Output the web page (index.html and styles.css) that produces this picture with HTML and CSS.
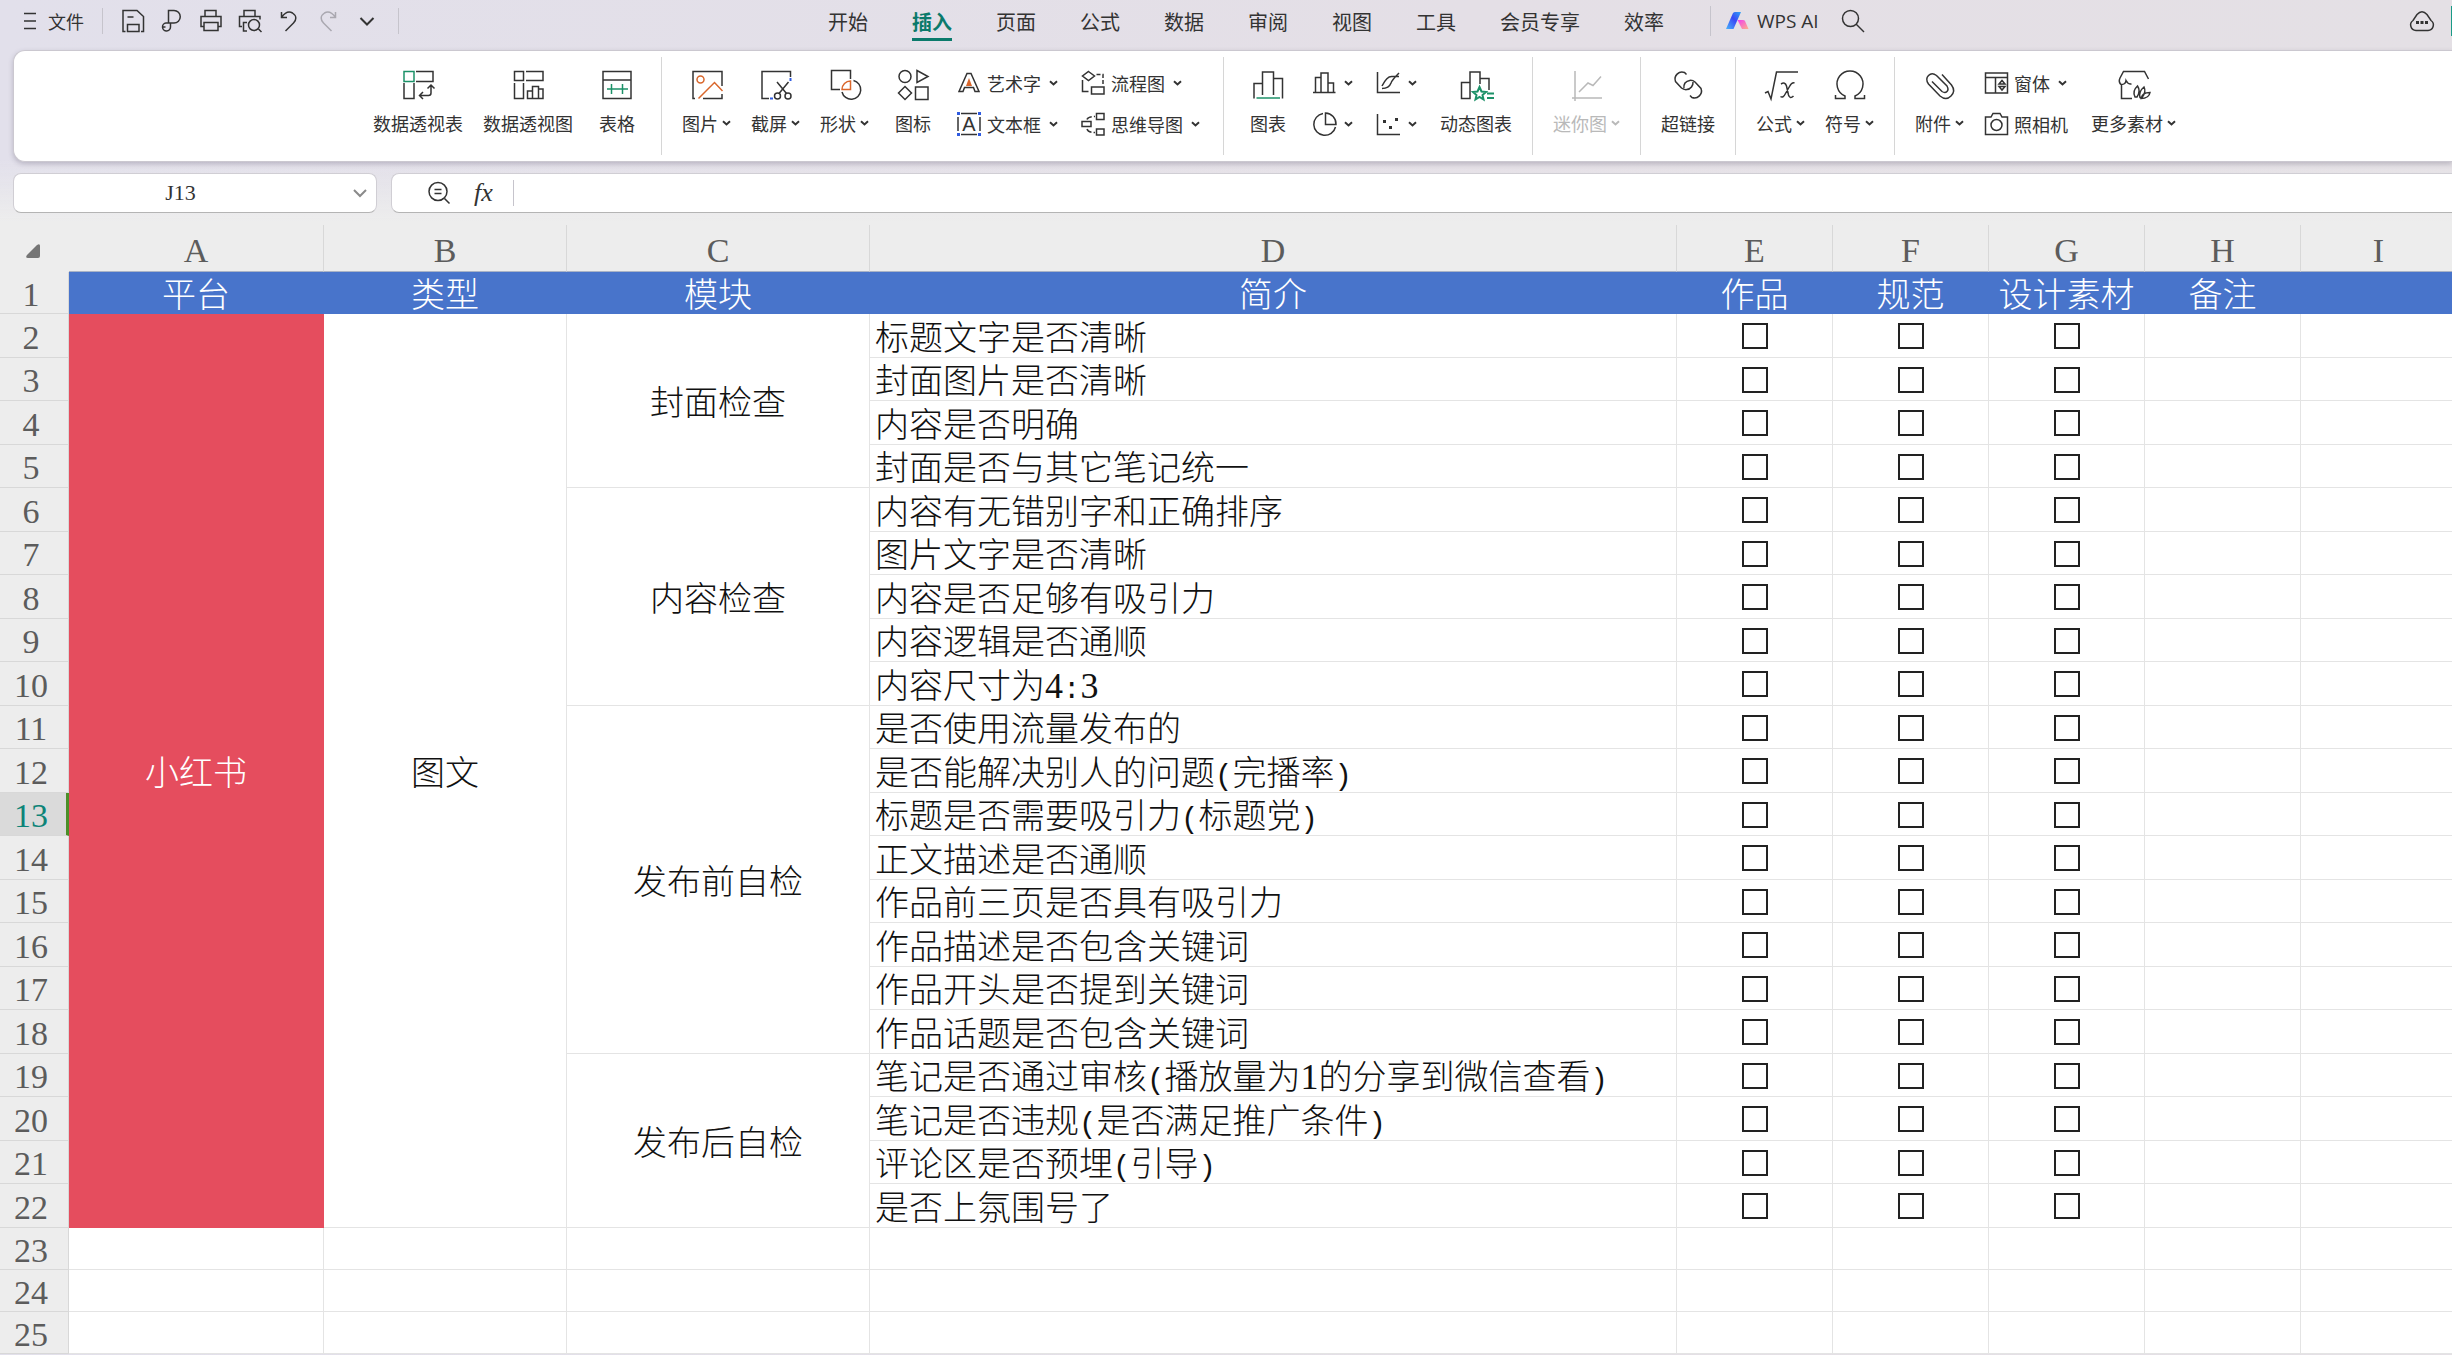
FILE: index.html
```html
<!DOCTYPE html>
<html lang="zh-CN">
<head>
<meta charset="utf-8">
<title>WPS 表格</title>
<link rel="stylesheet" href="styles.css">
</head>
<body>
<svg class="defs" aria-hidden="true">
  <symbol id="chev" viewBox="0 0 9 6"><path d="M1 1.2l3.5 3.2L8 1.2" fill="none" stroke="currentColor" stroke-width="2"/></symbol>
</svg>

<header class="topbar">
  <div class="quick">
    <button class="file"><svg width="12" height="18" viewBox="0 0 12 18"><path d="M0 1.5h12M0 9h12M0 16.5h12"/></svg>文件</button>
    <span class="rule"></span>
    <div class="quick-buttons">
      <button aria-label="保存"><svg width="24" height="24" viewBox="0 0 24 24"><path d="M4.500 22.500H2V1.500h14l6.500 6V22.500h-2.500M6.500 22.500v-7H18v7zM6.500 8h6"/></svg></button>
      <button aria-label="输出"><svg width="24" height="24" viewBox="0 0 24 24"><path d="M8.500 14V1.500H14a6 6 0 0 1 0 12.500H6a4 4 0 1 0 4.500 4V14M2.500 18h3"/></svg></button>
      <button aria-label="打印"><svg width="24" height="24" viewBox="0 0 24 24"><path d="M6 7V1.500h11V7M5 17.500H2V7.500h20v10h-3M5 13.500h14v8H5z"/></svg></button>
      <button aria-label="打印预览"><svg width="24" height="24" viewBox="0 0 24 24"><path d="M6 7V1.500h11V7M4 17.500H1.500V7.500H22v3M9 22H5.500v-8.500H9M20.500 20l3 3"/><circle cx="16" cy="16" r="5.500"/></svg></button>
      <button aria-label="撤销"><svg width="24" height="24" viewBox="0 0 24 24"><path d="M4.500 3v5.500H10M4.500 8.500C8 3.500 12 2 15.500 4c4.500 3 4 7 1 10L8.500 22"/></svg></button>
      <button aria-label="恢复" class="dim"><svg width="24" height="24" viewBox="0 0 24 24"><path d="M19.500 3v5.500H14M19.500 8.500C16 3.500 12 2 8.500 4c-4.500 3-4 7-1 10l8 8"/></svg></button>
      <button aria-label="更多"><svg width="24" height="24" viewBox="0 0 24 24"><path d="M5.500 9l6.500 6.500L18.500 9" stroke-width="2"/></svg></button>
    </div>
    <span class="rule"></span>
  </div>
  <nav class="tabs">
    <a href="#">开始</a><a href="#" class="active" aria-current="page">插入</a><a href="#">页面</a><a href="#">公式</a><a href="#">数据</a><a href="#">审阅</a><a href="#">视图</a><a href="#">工具</a><a href="#">会员专享</a><a href="#">效率</a>
  </nav>
  <div class="ai">
    <span class="rule tall"></span>
    <button class="ai-button"><svg width="24" height="18" viewBox="0 0 24 18"><defs><linearGradient id="g1" x1="1" y1="0" x2="0" y2="1"><stop offset="0" stop-color="#2fa4f5"/><stop offset=".45" stop-color="#3a48f5"/><stop offset="1" stop-color="#48b4fa"/></linearGradient><linearGradient id="g2" x1="0" y1="0" x2="1" y2="1"><stop offset="0" stop-color="#f03df0"/><stop offset="1" stop-color="#ffb08a"/></linearGradient></defs><path d="M8 1q1-1 2-1h6L8.500 17H1z" fill="url(#g1)" stroke="none"/><path d="M12.500 8H18q1.500 0 2 1l3.500 8h-6.500z" fill="url(#g2)" stroke="none"/></svg>WPS AI</button>
    <button class="search" aria-label="搜索"><svg width="24" height="24" viewBox="0 0 24 24"><circle cx="9.500" cy="9.500" r="8"/><path d="M15 15l8 8"/></svg></button>
  </div>
  <div class="account">
    <button aria-label="云服务"><svg width="26" height="22" viewBox="0 0 26 22"><path d="M7 20.500a5.500 5.500 0 0 1-3-10L8 4.500Q13-1 18 4.500l4 6a5.500 5.500 0 0 1-3 10z"/><path d="M7 12.500h3M11.500 12.500h3M16 12.500h3" stroke-width="3"/></svg></button>
    <button class="share" aria-label="分享"></button>
  </div>
</header>

<section class="ribbon" aria-label="插入">
  <button class="big"><svg width="32" height="32" viewBox="0 0 32 32"><path class="g" d="M2 2.500h10v10H2z"/><path d="M14 2.500h17v10H14M2 14v15.500h10V14M29 16v8q0 2.500-2.500 2.500H17.500M25.500 19.500l3.500-3.500 3.500 3.500M21 23l-3.500 3.500L21 30"/></svg><span>数据透视表</span></button>
  <button class="big"><svg width="32" height="32" viewBox="0 0 32 32"><path d="M2.500 2.500h9v9h-9zM14 2.500h17v9H14M2.500 14v15.500h9V14M20.500 29.500h-5V22h5M20.500 29.500V17.500h6v12zM26.500 20H31v9.500h-4.500"/></svg><span>数据透视图</span></button>
  <button class="big"><svg width="32" height="32" viewBox="0 0 32 32"><path d="M2 2.500h28v27H2zM2 11h28"/><path class="g" d="M6 20h21M10.500 15v10M21.500 15v10"/></svg><span>表格</span></button>
  <span class="sep"></span>
  <button class="big"><svg width="32" height="32" viewBox="0 0 32 32"><path d="M4 29.500H2v-27h29V17M12 29.500h19V25"/><g class="o"><circle cx="9.500" cy="10.500" r="3.500"/><path d="M7.500 29.500l16-16 8 8.500"/></g></svg><span>图片<svg class="chev"><use href="#chev"/></svg></span></button>
  <button class="big"><svg width="32" height="32" viewBox="0 0 32 32"><path d="M9 29.500H2v-27h28.500V8M17 13l9.500 11.500M28.500 13L19 24.500"/><circle cx="17.500" cy="27" r="3"/><circle cx="28" cy="27" r="3"/><path class="b" d="M10 29.500h3M30.500 9v3"/></svg><span>截屏<svg class="chev"><use href="#chev"/></svg></span></button>
  <button class="big"><svg width="32" height="32" viewBox="0 0 32 32"><path d="M11 20.500H2.500V1.500h19V10M24.500 11.500a9.500 9.500 0 1 1-11.500 11.500"/><path class="o" d="M21.500 12v8.500H13a8.500 8.500 0 0 1 8.500-8.500z"/></svg><span>形状<svg class="chev"><use href="#chev"/></svg></span></button>
  <button class="big"><svg width="32" height="32" viewBox="0 0 32 32"><circle cx="8" cy="7.500" r="6"/><path d="M20 1.500l11 6-11 6zM8 17.500l6.500 6.500L8 30.500 1.500 24zM18.500 18H31v12.500H18.500z"/></svg><span>图标</span></button>
  <div class="pair">
    <button class="small"><svg width="24" height="24" viewBox="0 0 24 24"><path d="M10 2.500h4l8 18h-4l-1.500-4h-9L6 20.500H2z"/><path d="M12 7l3 8H9z" fill="#d9662b" stroke="none"/></svg>艺术字<svg class="chev"><use href="#chev"/></svg></button>
    <button class="small"><svg width="24" height="24" viewBox="0 0 24 24"><path d="M4 1.500h16M4 22.500h16M1 5v14M23 5v14"/><path d="M0 0h3v3H0zM21 0h3v3h-3zM0 21h3v3H0zM21 21h3v3h-3z" fill="#2f5be0" stroke="none"/><text x="12" y="19" font-size="20" text-anchor="middle">A</text></svg>文本框<svg class="chev"><use href="#chev"/></svg></button>
  </div>
  <div class="pair">
    <button class="small"><svg width="24" height="24" viewBox="0 0 24 24"><path d="M7.500 0.500l6 4.500-6 4.500-6-4.500zM10.500 16H23v7H10.500zM1.500 9v11.500h6"/><path d="M15.500 3.500H22V15" stroke-dasharray="4 2"/></svg>流程图<svg class="chev"><use href="#chev"/></svg></button>
    <button class="small"><svg width="24" height="24" viewBox="0 0 24 24"><path d="M1 9.500h9v5H1zM15.500 1.500H23v6h-7.500zM15.500 17H23v6h-7.500z"/><path d="M6 7.500q1-3 8-3M6 17q1 3.500 8 3.500" stroke-dasharray="6 2"/></svg>思维导图<svg class="chev"><use href="#chev"/></svg></button>
  </div>
  <span class="sep"></span>
  <button class="big"><svg width="32" height="32" viewBox="0 0 32 32"><path d="M2 29.500v-15h8.500M10.500 26V3h11v23M21.500 9.500h9v20"/><path class="g" d="M4.500 29h23.500"/></svg><span>图表</span></button>
  <div class="pair">
    <button class="small" aria-label="柱形图"><svg width="24" height="24" viewBox="0 0 24 24"><path d="M1 21.500h22.500M3.500 21.500v-15H9v15V2h7v19.500M16 12h5.500v9.500"/></svg><svg class="chev"><use href="#chev"/></svg></button>
    <button class="small" aria-label="饼图"><svg width="24" height="24" viewBox="0 0 24 24"><path d="M11 1.500A11 11 0 1 0 23.500 15M13.500 1v11.500h10.500A11 11 0 0 0 13.500 1z"/></svg><svg class="chev"><use href="#chev"/></svg></button>
  </div>
  <div class="pair">
    <button class="small" aria-label="折线图"><svg width="24" height="24" viewBox="0 0 24 24"><path d="M1.500 1v20.500H24M6 15q5-10 10-9.500h7M6 17.500q7 0 9-5.500 1-3 8-10"/></svg><svg class="chev"><use href="#chev"/></svg></button>
    <button class="small" aria-label="散点图"><svg width="24" height="24" viewBox="0 0 24 24"><path d="M1.500 2v20.500H24"/><path d="M7 9.500h3M13 15.500h3M19 7.500h3" stroke-width="3"/></svg><svg class="chev"><use href="#chev"/></svg></button>
  </div>
  <button class="big"><svg width="32" height="32" viewBox="0 0 32 32"><path d="M10 29.500H1.500v-16H10zM10 13.500V3h10v12M20 9.500h9V21"/><path class="g" stroke-width="2" d="M19.500 18l2 4.500 4.500.5-3.500 3 1 4.500-4-2.500-4 2.500 1-4.500-3.500-3 4.500-.5zM27 24.500h7M27 29h7"/></svg><span>动态图表</span></button>
  <span class="sep"></span>
  <button class="big dim" disabled><svg width="32" height="32" viewBox="0 0 32 32"><path d="M4 2v30M1 29h30M8 23l9-9 5 2.500 8-9"/></svg><span>迷你图<svg class="chev"><use href="#chev"/></svg></span></button>
  <span class="sep"></span>
  <button class="big"><svg width="32" height="32" viewBox="0 0 32 32"><path d="M14.500 5.500l-2-2a7 7 0 0 0-9 9l6 6.500a7 7 0 0 0 10-1 7 7 0 0 0 1.500-5M18 26.500l2 2a7 7 0 0 0 9-9L23 13a7 7 0 0 0-10 1 7 7 0 0 0-1 5"/></svg><span>超链接</span></button>
  <span class="sep"></span>
  <button class="big"><svg width="32" height="32" viewBox="0 0 32 32"><path d="M0 24l3-1.500L6 30 11.500 3H33"/><path d="M16 15q4-2.500 5.500 2l2 9q1.500 4.500 5 1M29.500 14q-2.500-1-5 3.500l-4 7q-2.500 5-5 3"/></svg><span>公式<svg class="chev"><use href="#chev"/></svg></span></button>
  <button class="big"><svg width="32" height="32" viewBox="0 0 32 32"><path d="M1.500 26v3.500H11v-2.500A13 13 0 1 1 21 27v2.500h9.500V26"/></svg><span>符号<svg class="chev"><use href="#chev"/></svg></span></button>
  <span class="sep"></span>
  <button class="big"><svg width="32" height="32" viewBox="0 0 32 32"><path d="M8 12.500l10 10q3 2 5 0t0-5.500L12.500 6.500q-4.500-3.500-8 0t0 8.500l11.500 12q6 5 11 0t.5-11L18 5.500"/></svg><span>附件<svg class="chev"><use href="#chev"/></svg></span></button>
  <div class="pair">
    <button class="small"><svg width="24" height="24" viewBox="0 0 24 24"><path d="M1.500 2h22v20h-22zM1.500 6.500h22M11.500 6.500V22M15 13l3-3.500 3 3.500zM15 15.500l3 3.500 3-3.500z"/></svg>窗体<svg class="chev"><use href="#chev"/></svg></button>
    <button class="small"><svg width="24" height="24" viewBox="0 0 24 24"><path d="M1.500 5H7l2-3.500h7L18 5h5.500v17.500h-22z"/><circle cx="12.500" cy="13" r="5.500"/></svg>照相机</button>
  </div>
  <button class="big"><svg width="32" height="32" viewBox="0 0 32 32"><path d="M14 29.500H3.500V16Q0 13 2 9l3.500-6.500h21l4 7.500M3.500 15.500q4 0 4.500-4 2 4 5.500 3.500M17 28q-3-6 2.500-11 3.500 5-.5 11zM22 28.500q-1.500-6 4-10.500 2.500 5-2 10.500zM23 29.500q1-6 9-6-1 6-9 6z"/></svg><span>更多素材<svg class="chev"><use href="#chev"/></svg></span></button>
</section>

<div class="formula-row">
  <div class="name-box">
    <input type="text" value="J13" aria-label="名称框">
    <button aria-label="展开名称框"><svg width="14" height="8" viewBox="0 0 14 8"><path d="M1 1l6 6 6-6" stroke="#8a8a8a" stroke-width="2"/></svg></button>
  </div>
  <div class="formula-box">
    <button aria-label="缩放"><svg width="22" height="24" viewBox="0 0 22 24"><circle cx="10" cy="10.500" r="9"/><path d="M6.500 8.500h7M6.500 12.500h7M16.500 17.500l5 5"/></svg></button>
    <button class="fx" aria-label="插入函数">fx</button>
    <span class="rule"></span>
    <input type="text" aria-label="编辑栏">
  </div>
</div>

<main class="sheet">
<table>
  <colgroup><col class="w-num"><col class="w-a"><col class="w-b"><col class="w-c"><col class="w-d"><col class="w-e"><col class="w-e"><col class="w-e"><col class="w-e"><col></colgroup>
  <thead>
    <tr><th class="corner"><svg width="14" height="14" viewBox="0 0 14 14"><path d="M14 2v10q0 2-2 2H2q-3 0-1-3L11 1q3-2 3 1z" fill="#757575" stroke="none"/></svg></th><th>A</th><th>B</th><th>C</th><th>D</th><th>E</th><th>F</th><th>G</th><th>H</th><th>I</th></tr>
  </thead>
  <tbody>
    <tr class="titles"><th>1</th><td>平台</td><td>类型</td><td>模块</td><td>简介</td><td>作品</td><td>规范</td><td>设计素材</td><td>备注</td><td></td></tr>
    <tr><th>2</th><td class="brand" rowspan="21">小红书</td><td class="mid" rowspan="21">图文</td><td class="mid" rowspan="4">封面检查</td><td>标题文字是否清晰</td><td class="tick"><input type="checkbox" aria-label="作品 2"></td><td class="tick"><input type="checkbox" aria-label="规范 2"></td><td class="tick"><input type="checkbox" aria-label="设计素材 2"></td><td></td><td></td></tr>
    <tr><th>3</th><td>封面图片是否清晰</td><td class="tick"><input type="checkbox" aria-label="作品 3"></td><td class="tick"><input type="checkbox" aria-label="规范 3"></td><td class="tick"><input type="checkbox" aria-label="设计素材 3"></td><td></td><td></td></tr>
    <tr><th>4</th><td>内容是否明确</td><td class="tick"><input type="checkbox" aria-label="作品 4"></td><td class="tick"><input type="checkbox" aria-label="规范 4"></td><td class="tick"><input type="checkbox" aria-label="设计素材 4"></td><td></td><td></td></tr>
    <tr><th>5</th><td>封面是否与其它笔记统一</td><td class="tick"><input type="checkbox" aria-label="作品 5"></td><td class="tick"><input type="checkbox" aria-label="规范 5"></td><td class="tick"><input type="checkbox" aria-label="设计素材 5"></td><td></td><td></td></tr>
    <tr><th>6</th><td class="mid" rowspan="5">内容检查</td><td>内容有无错别字和正确排序</td><td class="tick"><input type="checkbox" aria-label="作品 6"></td><td class="tick"><input type="checkbox" aria-label="规范 6"></td><td class="tick"><input type="checkbox" aria-label="设计素材 6"></td><td></td><td></td></tr>
    <tr><th>7</th><td>图片文字是否清晰</td><td class="tick"><input type="checkbox" aria-label="作品 7"></td><td class="tick"><input type="checkbox" aria-label="规范 7"></td><td class="tick"><input type="checkbox" aria-label="设计素材 7"></td><td></td><td></td></tr>
    <tr><th>8</th><td>内容是否足够有吸引力</td><td class="tick"><input type="checkbox" aria-label="作品 8"></td><td class="tick"><input type="checkbox" aria-label="规范 8"></td><td class="tick"><input type="checkbox" aria-label="设计素材 8"></td><td></td><td></td></tr>
    <tr><th>9</th><td>内容逻辑是否通顺</td><td class="tick"><input type="checkbox" aria-label="作品 9"></td><td class="tick"><input type="checkbox" aria-label="规范 9"></td><td class="tick"><input type="checkbox" aria-label="设计素材 9"></td><td></td><td></td></tr>
    <tr><th>10</th><td>内容尺寸为<span class="digit">4</span><span class="half">:</span><span class="digit">3</span></td><td class="tick"><input type="checkbox" aria-label="作品 10"></td><td class="tick"><input type="checkbox" aria-label="规范 10"></td><td class="tick"><input type="checkbox" aria-label="设计素材 10"></td><td></td><td></td></tr>
    <tr><th>11</th><td class="mid" rowspan="8">发布前自检</td><td>是否使用流量发布的</td><td class="tick"><input type="checkbox" aria-label="作品 11"></td><td class="tick"><input type="checkbox" aria-label="规范 11"></td><td class="tick"><input type="checkbox" aria-label="设计素材 11"></td><td></td><td></td></tr>
    <tr><th>12</th><td>是否能解决别人的问题<span class="half">(</span>完播率<span class="half">)</span></td><td class="tick"><input type="checkbox" aria-label="作品 12"></td><td class="tick"><input type="checkbox" aria-label="规范 12"></td><td class="tick"><input type="checkbox" aria-label="设计素材 12"></td><td></td><td></td></tr>
    <tr><th class="current">13</th><td>标题是否需要吸引力<span class="half">(</span>标题党<span class="half">)</span></td><td class="tick"><input type="checkbox" aria-label="作品 13"></td><td class="tick"><input type="checkbox" aria-label="规范 13"></td><td class="tick"><input type="checkbox" aria-label="设计素材 13"></td><td></td><td></td></tr>
    <tr><th>14</th><td>正文描述是否通顺</td><td class="tick"><input type="checkbox" aria-label="作品 14"></td><td class="tick"><input type="checkbox" aria-label="规范 14"></td><td class="tick"><input type="checkbox" aria-label="设计素材 14"></td><td></td><td></td></tr>
    <tr><th>15</th><td>作品前三页是否具有吸引力</td><td class="tick"><input type="checkbox" aria-label="作品 15"></td><td class="tick"><input type="checkbox" aria-label="规范 15"></td><td class="tick"><input type="checkbox" aria-label="设计素材 15"></td><td></td><td></td></tr>
    <tr><th>16</th><td>作品描述是否包含关键词</td><td class="tick"><input type="checkbox" aria-label="作品 16"></td><td class="tick"><input type="checkbox" aria-label="规范 16"></td><td class="tick"><input type="checkbox" aria-label="设计素材 16"></td><td></td><td></td></tr>
    <tr><th>17</th><td>作品开头是否提到关键词</td><td class="tick"><input type="checkbox" aria-label="作品 17"></td><td class="tick"><input type="checkbox" aria-label="规范 17"></td><td class="tick"><input type="checkbox" aria-label="设计素材 17"></td><td></td><td></td></tr>
    <tr><th>18</th><td>作品话题是否包含关键词</td><td class="tick"><input type="checkbox" aria-label="作品 18"></td><td class="tick"><input type="checkbox" aria-label="规范 18"></td><td class="tick"><input type="checkbox" aria-label="设计素材 18"></td><td></td><td></td></tr>
    <tr><th>19</th><td class="mid" rowspan="4">发布后自检</td><td>笔记是否通过审核<span class="half">(</span>播放量为<span class="digit">1</span>的分享到微信查看<span class="half">)</span></td><td class="tick"><input type="checkbox" aria-label="作品 19"></td><td class="tick"><input type="checkbox" aria-label="规范 19"></td><td class="tick"><input type="checkbox" aria-label="设计素材 19"></td><td></td><td></td></tr>
    <tr><th>20</th><td>笔记是否违规<span class="half">(</span>是否满足推广条件<span class="half">)</span></td><td class="tick"><input type="checkbox" aria-label="作品 20"></td><td class="tick"><input type="checkbox" aria-label="规范 20"></td><td class="tick"><input type="checkbox" aria-label="设计素材 20"></td><td></td><td></td></tr>
    <tr><th>21</th><td>评论区是否预埋<span class="half">(</span>引导<span class="half">)</span></td><td class="tick"><input type="checkbox" aria-label="作品 21"></td><td class="tick"><input type="checkbox" aria-label="规范 21"></td><td class="tick"><input type="checkbox" aria-label="设计素材 21"></td><td></td><td></td></tr>
    <tr><th>22</th><td>是否上氛围号了</td><td class="tick"><input type="checkbox" aria-label="作品 22"></td><td class="tick"><input type="checkbox" aria-label="规范 22"></td><td class="tick"><input type="checkbox" aria-label="设计素材 22"></td><td></td><td></td></tr>
    <tr class="blank"><th>23</th><td></td><td></td><td></td><td></td><td></td><td></td><td></td><td></td><td></td></tr>
    <tr class="blank"><th>24</th><td></td><td></td><td></td><td></td><td></td><td></td><td></td><td></td><td></td></tr>
    <tr class="blank"><th>25</th><td></td><td></td><td></td><td></td><td></td><td></td><td></td><td></td><td></td></tr>
  </tbody>
</table>
</main>
</body>
</html>
```
FILE: styles.css
```css
* { box-sizing: border-box; }

body {
  margin: 0;
  overflow-x: hidden;
  background:
    linear-gradient(to bottom, rgba(237, 237, 237, 0) 160px, #ededed 222px),
    linear-gradient(to right, #e2e0eb, #e4dfe6 60%, #e4e0e5);
  color: #333;
  font-family: "Noto Sans CJK SC", sans-serif;
  font-size: 18px;
  line-height: 24px;
}

button, input { font: inherit; color: inherit; margin: 0; }
button { padding: 0; border: 0; background: none; flex: none; }

svg { fill: none; stroke: currentColor; stroke-width: 1.5; overflow: visible; flex: none; }
svg text { fill: currentColor; stroke: none; font-family: "Liberation Sans", sans-serif; }
.defs { display: none; }
.chev { width: 9px; height: 6px; }
.g { stroke: #1c9168; }
.o { stroke: #d9662b; }
.b { stroke: #2f5be0; stroke-width: 2; }
.rule { flex: none; width: 1px; height: 26px; background: #c6c4cc; }
.rule.tall { height: 30px; }

/* Top bar */
.topbar { display: flex; align-items: center; height: 50px; padding-bottom: 9px; overflow: hidden; }
.quick { display: flex; align-items: center; width: 828px; padding-left: 24px; gap: 12px; flex: none; }
.file { display: flex; align-items: center; gap: 12px; margin-right: 6px; }
.quick-buttons { display: flex; margin-left: -2px; }
.quick-buttons button { display: flex; justify-content: center; width: 39px; }
.topbar .dim { color: #aaa8b0; }

.tabs { display: flex; gap: 44px; flex: none; font-size: 20px; }
.tabs a { color: #333; text-decoration: none; line-height: 30px; height: 34px; margin-top: 6px; }
.tabs .active { color: #0b7a6b; font-weight: 700; border-bottom: 3px solid #0b7a6b; }

.ai { display: flex; align-items: center; margin-left: 46px; flex: none; }
.ai-button { display: flex; align-items: center; gap: 8px; margin-left: 14px; font-family: "Open Sans", "Noto Sans CJK SC", sans-serif; font-size: 19px; }
.search { display: flex; margin-left: 22px; }
.account { display: flex; align-items: center; gap: 16px; margin-left: auto; margin-right: -79px; }
.account button { display: flex; }
.share { width: 80px; height: 30px; background: #1a9a86; }

/* Ribbon */
.ribbon {
  display: flex;
  gap: 20px;
  height: 112px;
  margin-left: 13px;
  padding-left: 359px;
  background: #fff;
  border: 1px solid #cbc8d0;
  border-right: 0;
  border-radius: 12px 0 0 12px;
  box-shadow: 0 2px 5px rgba(60, 50, 80, .25);
  overflow: hidden;
}
.sep { flex: none; width: 1px; margin: 6px 0; background: #d6d6d6; }
.big { display: flex; flex-direction: column; align-items: center; gap: 10px; min-width: 48px; padding-top: 18px; }
.big span { display: flex; align-items: center; gap: 4px; white-space: nowrap; }
.big.dim { color: #b9b9b9; }
.pair { display: flex; flex-direction: column; gap: 17px; padding: 20px 3px 0 0; flex: none; }
.small { display: flex; align-items: center; height: 24px; gap: 6px; white-space: nowrap; }
.small .chev { margin-left: 2px; }

/* Formula bar */
.formula-row { display: flex; gap: 14px; padding: 11px 0 12px 13px; }
.name-box, .formula-box {
  display: flex;
  align-items: center;
  height: 40px;
  background: #fff;
  border: 1px solid #d0ced4;
  border-bottom-color: #b4b4b4;
  border-radius: 8px;
}
.name-box { width: 364px; }
.name-box input {
  flex: 1;
  min-width: 0;
  border: 0;
  background: none;
  text-align: center;
  font-family: "Liberation Serif", serif;
  font-size: 22px;
}
.name-box button { display: flex; margin: 0 9px 0 6px; }
.formula-box { flex: 1; border-right: 0; border-radius: 8px 0 0 8px; padding-left: 36px; }
.formula-box button { display: flex; }
.formula-box .fx { margin: 0 20px 0 24px; font-family: "Liberation Serif", serif; font-style: italic; font-size: 26px; }
.formula-box input { flex: 1; border: 0; background: none; }

/* Sheet */
.sheet { overflow: hidden; }
table {
  width: 100%;
  min-width: 2457px;
  table-layout: fixed;
  border-spacing: 0;
  font-size: 34px;
  font-weight: 300;
  line-height: 36px;
}
.w-num { width: 69px; }
.w-a { width: 255px; }
.w-b { width: 243px; }
.w-c { width: 303px; }
.w-d { width: 807px; }
.w-e { width: 156px; }

th, td { height: 43px; padding: 4px 0 0; border: 0 solid #e4e4e4; border-width: 0 1px 1px 0; white-space: nowrap; }
tbody tr:nth-child(even) > * { height: 44px; }
tbody tr.titles > *, tbody tr.blank > * { height: 42px; }
td { background: #fff; color: #111; padding: 0 0 0 5px; text-align: left; }
th {
  background: #ededed;
  color: #5c5c5c;
  border-color: #d8d8d8;
  font-family: "Liberation Serif", serif;
  font-weight: 400;
}
thead th { height: 47px; padding-top: 6px; border-bottom-color: #a9b3c6; }
thead .corner { border-color: #ededed; padding: 2px 4px 0 0; line-height: 14px; text-align: center; }
thead .corner svg { margin-left: 2px; }
tbody th { padding-right: 6px; }
tbody th.current { background: #dadada; color: #0d8478; border-right: 3px solid #4b8f28; padding-right: 4px; }
.titles td { background: #4874cb; color: #fff; text-align: center; border-color: #4874cb; padding-left: 0; }
td.mid, td.brand { text-align: center; padding-left: 0; }
td.brand { background: #e54d5e; color: #fff; border-color: #e54d5e; }
.half { font-family: "Liberation Mono", monospace; font-size: 29px; line-height: 0; }
.digit { font-family: "Liberation Serif", serif; font-size: 36px; line-height: 0; }

td.tick { text-align: center; padding: 1px 0 0 1px; line-height: 0; }
.tick input { appearance: none; width: 26px; height: 26px; border: 2px solid #222; background: #fff; vertical-align: middle; }
```
